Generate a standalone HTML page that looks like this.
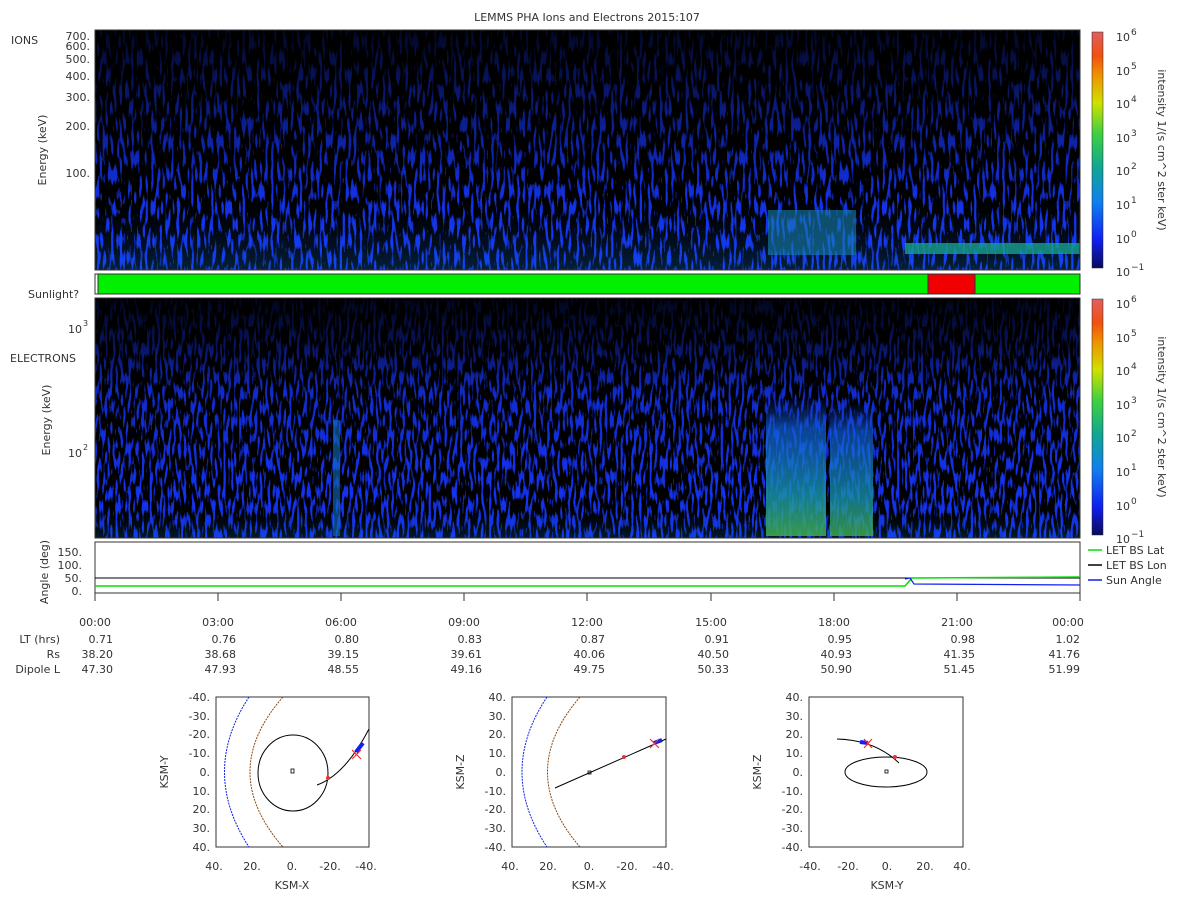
<!DOCTYPE html>
<html><head><meta charset="utf-8"><style>
html,body{margin:0;padding:0;background:#fff;width:1200px;height:900px;overflow:hidden}
svg text{font-family:"DejaVu Sans","Liberation Sans",sans-serif;fill:#333;font-size:11px}
</style></head><body>
<svg width="1200" height="900" xmlns="http://www.w3.org/2000/svg">
<defs>
<filter id="nz" x="0" y="0" width="100%" height="100%" color-interpolation-filters="sRGB">
<feTurbulence type="fractalNoise" baseFrequency="0.35 0.06" numOctaves="1" seed="3" result="n"/>
<feColorMatrix in="n" type="matrix" values="0 0 0 0 0.08  0 0 0 0 0.2  0 0 0 0 0.95  6 0 0 0 -3.0" result="c"/>
<feComponentTransfer in="c"><feFuncA type="discrete" tableValues="0 0.6 0.85 1"/></feComponentTransfer>
</filter>
<filter id="nz2" x="0" y="0" width="100%" height="100%" color-interpolation-filters="sRGB">
<feTurbulence type="fractalNoise" baseFrequency="0.38 0.07" numOctaves="1" seed="9" result="n"/>
<feColorMatrix in="n" type="matrix" values="0 0 0 0 0.08  0 0 0 0 0.2  0 0 0 0 0.95  6 0 0 0 -2.9" result="c"/>
<feComponentTransfer in="c"><feFuncA type="discrete" tableValues="0 0.6 0.85 1"/></feComponentTransfer>
</filter>
<linearGradient id="fadeI" x1="0" y1="0" x2="0" y2="1">
<stop offset="0" stop-color="#000" stop-opacity="0.85"/><stop offset="0.35" stop-color="#000" stop-opacity="0.45"/><stop offset="0.7" stop-color="#000" stop-opacity="0.05"/><stop offset="0.85" stop-color="#1060e0" stop-opacity="0.1"/><stop offset="1" stop-color="#1080e0" stop-opacity="0.25"/></linearGradient>
<linearGradient id="fadeE" x1="0" y1="0" x2="0" y2="1">
<stop offset="0" stop-color="#000" stop-opacity="0.9"/><stop offset="0.2" stop-color="#000" stop-opacity="0.6"/><stop offset="0.4" stop-color="#000" stop-opacity="0.15"/><stop offset="0.85" stop-color="#000" stop-opacity="0"/><stop offset="1" stop-color="#1080e0" stop-opacity="0.2"/></linearGradient>
<linearGradient id="cb" x1="0" y1="1" x2="0" y2="0">
<stop offset="0" stop-color="#0a0a5a"/><stop offset="0.12" stop-color="#1020f0"/><stop offset="0.28" stop-color="#1080f0"/><stop offset="0.43" stop-color="#10a890"/><stop offset="0.57" stop-color="#40d040"/><stop offset="0.7" stop-color="#d0e000"/><stop offset="0.82" stop-color="#f09000"/><stop offset="0.9" stop-color="#f05010"/><stop offset="1" stop-color="#e06060"/></linearGradient>
<linearGradient id="blob" x1="0" y1="0" x2="0" y2="1">
<stop offset="0" stop-color="#1040d0" stop-opacity="0.1"/><stop offset="0.2" stop-color="#1060e0" stop-opacity="0.8"/><stop offset="0.7" stop-color="#1890a8"/><stop offset="1" stop-color="#40b050"/></linearGradient>
</defs>

<text x="587" y="21" text-anchor="middle">LEMMS PHA Ions and Electrons  2015:107</text>

<rect x="95" y="30" width="985" height="240" fill="#000"/>
<rect x="95" y="30" width="985" height="240" filter="url(#nz)"/>
<rect x="95" y="30" width="985" height="240" fill="url(#fadeI)"/>
<rect x="768" y="210" width="88" height="45" fill="#1880b0" opacity="0.6"/>
<rect x="905" y="243" width="175" height="11" fill="#18a090" opacity="0.8"/>
<rect x="95" y="30" width="985" height="240" fill="none" stroke="#333"/>
<text x="11" y="44">IONS</text>
<g text-anchor="end"><text x="90" y="40">700.</text><text x="90" y="50">600.</text><text x="90" y="63">500.</text><text x="90" y="80">400.</text><text x="90" y="101">300.</text><text x="90" y="130">200.</text><text x="90" y="177">100.</text></g>
<text transform="translate(46,150) rotate(-90)" text-anchor="middle">Energy (keV)</text>

<rect x="95" y="274" width="985" height="20" fill="#00f000" stroke="#333"/>
<rect x="928" y="274" width="47" height="20" fill="#f00000" stroke="#333"/>
<rect x="95" y="274" width="3" height="20" fill="#fff" stroke="#333"/>
<text x="28" y="298">Sunlight?</text>

<rect x="95" y="298" width="985" height="240" fill="#000"/>
<rect x="95" y="298" width="985" height="240" filter="url(#nz2)"/>
<rect x="95" y="298" width="985" height="240" fill="url(#fadeE)"/>
<rect x="766" y="400" width="60" height="136" fill="url(#blob)" opacity="0.85"/>
<rect x="830" y="405" width="43" height="131" fill="url(#blob)" opacity="0.8"/>
<rect x="333" y="420" width="7" height="116" fill="#1070c0" opacity="0.6"/>
<rect x="95" y="298" width="985" height="240" fill="none" stroke="#333"/>
<text x="10" y="362">ELECTRONS</text>
<g text-anchor="end"><text x="82" y="333">10</text><text x="82" y="457">10</text></g>
<text x="83" y="326" style="font-size:8px">3</text><text x="83" y="450" style="font-size:8px">2</text>
<text transform="translate(50,420) rotate(-90)" text-anchor="middle">Energy (keV)</text>

<rect x="1092" y="32" width="11" height="236" fill="url(#cb)" stroke="#222" stroke-width="0.5"/>
<rect x="1092" y="299" width="11" height="236" fill="url(#cb)" stroke="#222" stroke-width="0.5"/>
<g>
<text x="1116" y="41">10</text><text x="1116" y="75">10</text><text x="1116" y="108">10</text><text x="1116" y="142">10</text><text x="1116" y="175">10</text><text x="1116" y="209">10</text><text x="1116" y="243">10</text><text x="1116" y="276">10</text>
<text x="1116" y="308">10</text><text x="1116" y="342">10</text><text x="1116" y="375">10</text><text x="1116" y="409">10</text><text x="1116" y="442">10</text><text x="1116" y="476">10</text><text x="1116" y="510">10</text><text x="1116" y="543">10</text>
</g>
<g>
<text x="1131" y="35" style="font-size:9px">6</text><text x="1131" y="69" style="font-size:9px">5</text><text x="1131" y="102" style="font-size:9px">4</text><text x="1131" y="136" style="font-size:9px">3</text><text x="1131" y="169" style="font-size:9px">2</text><text x="1131" y="203" style="font-size:9px">1</text><text x="1131" y="237" style="font-size:9px">0</text><text x="1131" y="270" style="font-size:9px">−1</text>
<text x="1131" y="302" style="font-size:9px">6</text><text x="1131" y="336" style="font-size:9px">5</text><text x="1131" y="369" style="font-size:9px">4</text><text x="1131" y="403" style="font-size:9px">3</text><text x="1131" y="436" style="font-size:9px">2</text><text x="1131" y="470" style="font-size:9px">1</text><text x="1131" y="504" style="font-size:9px">0</text><text x="1131" y="537" style="font-size:9px">−1</text>
</g>
<text transform="translate(1158,150) rotate(90)" text-anchor="middle">intensity 1/(s cm^2 ster keV)</text>
<text transform="translate(1158,417) rotate(90)" text-anchor="middle">intensity 1/(s cm^2 ster keV)</text>

<rect x="95" y="542" width="985" height="51" fill="#fff" stroke="#333"/>
<line x1="95" y1="578" x2="1080" y2="578" stroke="#000" stroke-width="1"/>
<polyline points="95,586 905,586 912,578 1080,577" fill="none" stroke="#00e000" stroke-width="1.5"/>
<polyline points="905,579 910,578 914,584 1080,585" fill="none" stroke="#1020f0" stroke-width="1.2"/>
<g text-anchor="end"><text x="82" y="556">150.</text><text x="82" y="569">100.</text><text x="82" y="582">50.</text><text x="82" y="595">0.</text></g>
<text transform="translate(48,572) rotate(-90)" text-anchor="middle">Angle (deg)</text>
<line x1="1088" y1="550" x2="1102" y2="550" stroke="#00e000" stroke-width="1.5"/><text x="1106" y="554">LET BS Lat</text>
<line x1="1088" y1="565" x2="1102" y2="565" stroke="#000" stroke-width="1.5"/><text x="1106" y="569">LET BS Lon</text>
<line x1="1088" y1="580" x2="1102" y2="580" stroke="#1020f0" stroke-width="1.5"/><text x="1106" y="584">Sun Angle</text>
<g stroke="#333"><line x1="95" y1="593" x2="95" y2="601"/><line x1="218" y1="593" x2="218" y2="601"/><line x1="341" y1="593" x2="341" y2="601"/><line x1="464" y1="593" x2="464" y2="601"/><line x1="587" y1="593" x2="587" y2="601"/><line x1="711" y1="593" x2="711" y2="601"/><line x1="834" y1="593" x2="834" y2="601"/><line x1="957" y1="593" x2="957" y2="601"/><line x1="1080" y1="593" x2="1080" y2="601"/></g>

<g text-anchor="middle">
<text x="95" y="626">00:00</text><text x="218" y="626">03:00</text><text x="341" y="626">06:00</text><text x="464" y="626">09:00</text><text x="587" y="626">12:00</text><text x="711" y="626">15:00</text><text x="834" y="626">18:00</text><text x="957" y="626">21:00</text><text x="1068" y="626">00:00</text>
</g>
<g text-anchor="end">
<text x="60" y="643">LT (hrs)</text><text x="60" y="658">Rs</text><text x="60" y="673">Dipole L</text>
<text x="113" y="643">0.71</text><text x="236" y="643">0.76</text><text x="359" y="643">0.80</text><text x="482" y="643">0.83</text><text x="605" y="643">0.87</text><text x="729" y="643">0.91</text><text x="852" y="643">0.95</text><text x="975" y="643">0.98</text><text x="1080" y="643">1.02</text>
<text x="113" y="658">38.20</text><text x="236" y="658">38.68</text><text x="359" y="658">39.15</text><text x="482" y="658">39.61</text><text x="605" y="658">40.06</text><text x="729" y="658">40.50</text><text x="852" y="658">40.93</text><text x="975" y="658">41.35</text><text x="1080" y="658">41.76</text>
<text x="113" y="673">47.30</text><text x="236" y="673">47.93</text><text x="359" y="673">48.55</text><text x="482" y="673">49.16</text><text x="605" y="673">49.75</text><text x="729" y="673">50.33</text><text x="852" y="673">50.90</text><text x="975" y="673">51.45</text><text x="1080" y="673">51.99</text>
</g>

<g>
<rect x="216" y="697" width="153" height="150" fill="#fff" stroke="#333"/>
<g text-anchor="end"><text x="210" y="701">-40.</text><text x="210" y="720">-30.</text><text x="210" y="738">-20.</text><text x="210" y="757">-10.</text><text x="210" y="776">0.</text><text x="210" y="795">10.</text><text x="210" y="813">20.</text><text x="210" y="832">30.</text><text x="210" y="851">40.</text></g>
<g text-anchor="middle"><text x="214" y="870">40.</text><text x="252" y="870">20.</text><text x="292" y="870">0.</text><text x="330" y="870">-20.</text><text x="366" y="870">-40.</text></g>
<text x="292" y="889" text-anchor="middle">KSM-X</text>
<text transform="translate(168,772) rotate(-90)" text-anchor="middle">KSM-Y</text>
<path d="M249,697 Q200,772 249,847" fill="none" stroke="#1020f0" stroke-dasharray="2,1"/>
<path d="M283,697 Q217,772 283,847" fill="none" stroke="#8a4a10" stroke-dasharray="2,1"/>
<ellipse cx="293" cy="773" rx="35" ry="38" fill="none" stroke="#000"/>
<rect x="291" y="769" width="3" height="4" fill="none" stroke="#000" stroke-width="0.8"/>
<path d="M317,785 Q345,775 369,729" fill="none" stroke="#000"/>
<path d="M356,752 L363,743" stroke="#1020f0" stroke-width="4"/>
<path d="M352,750 L361,759 M361,750 L352,759" stroke="#f03030" stroke-width="1.2"/>
<circle cx="328" cy="778" r="2" fill="#f03030"/>
</g>
<g>
<rect x="512" y="697" width="154" height="150" fill="#fff" stroke="#333"/>
<g text-anchor="end"><text x="506" y="701">40.</text><text x="506" y="720">30.</text><text x="506" y="738">20.</text><text x="506" y="757">10.</text><text x="506" y="776">0.</text><text x="506" y="795">-10.</text><text x="506" y="813">-20.</text><text x="506" y="832">-30.</text><text x="506" y="851">-40.</text></g>
<g text-anchor="middle"><text x="510" y="870">40.</text><text x="548" y="870">20.</text><text x="589" y="870">0.</text><text x="627" y="870">-20.</text><text x="663" y="870">-40.</text></g>
<text x="589" y="889" text-anchor="middle">KSM-X</text>
<text transform="translate(464,772) rotate(-90)" text-anchor="middle">KSM-Z</text>
<path d="M547,697 Q497,772 547,847" fill="none" stroke="#1020f0" stroke-dasharray="2,1"/>
<path d="M580,697 Q515,772 580,847" fill="none" stroke="#8a4a10" stroke-dasharray="2,1"/>
<path d="M555,788 L666,739" stroke="#000"/>
<rect x="588" y="771" width="3" height="3" fill="none" stroke="#000" stroke-width="0.8"/>
<path d="M654,743 L662,740" stroke="#1020f0" stroke-width="4"/>
<path d="M650,739 L659,748 M659,739 L650,748" stroke="#f03030" stroke-width="1.2"/>
<circle cx="624" cy="757" r="2" fill="#f03030"/>
</g>
<g>
<rect x="809" y="697" width="154" height="150" fill="#fff" stroke="#333"/>
<g text-anchor="end"><text x="803" y="701">40.</text><text x="803" y="720">30.</text><text x="803" y="738">20.</text><text x="803" y="757">10.</text><text x="803" y="776">0.</text><text x="803" y="795">-10.</text><text x="803" y="813">-20.</text><text x="803" y="832">-30.</text><text x="803" y="851">-40.</text></g>
<g text-anchor="middle"><text x="810" y="870">-40.</text><text x="848" y="870">-20.</text><text x="887" y="870">0.</text><text x="925" y="870">20.</text><text x="962" y="870">40.</text></g>
<text x="887" y="889" text-anchor="middle">KSM-Y</text>
<text transform="translate(761,772) rotate(-90)" text-anchor="middle">KSM-Z</text>
<ellipse cx="886" cy="772" rx="41" ry="15" fill="none" stroke="#000"/>
<rect x="885" y="770" width="3" height="3" fill="none" stroke="#000" stroke-width="0.8"/>
<path d="M837,739 Q875,740 899,763" fill="none" stroke="#000"/>
<path d="M860,742 L868,743" stroke="#1020f0" stroke-width="4"/>
<path d="M864,739 L872,748 M872,739 L864,748" stroke="#f03030" stroke-width="1.2"/>
<circle cx="895" cy="757" r="2" fill="#f03030"/>
</g>
</svg>
</body></html>
